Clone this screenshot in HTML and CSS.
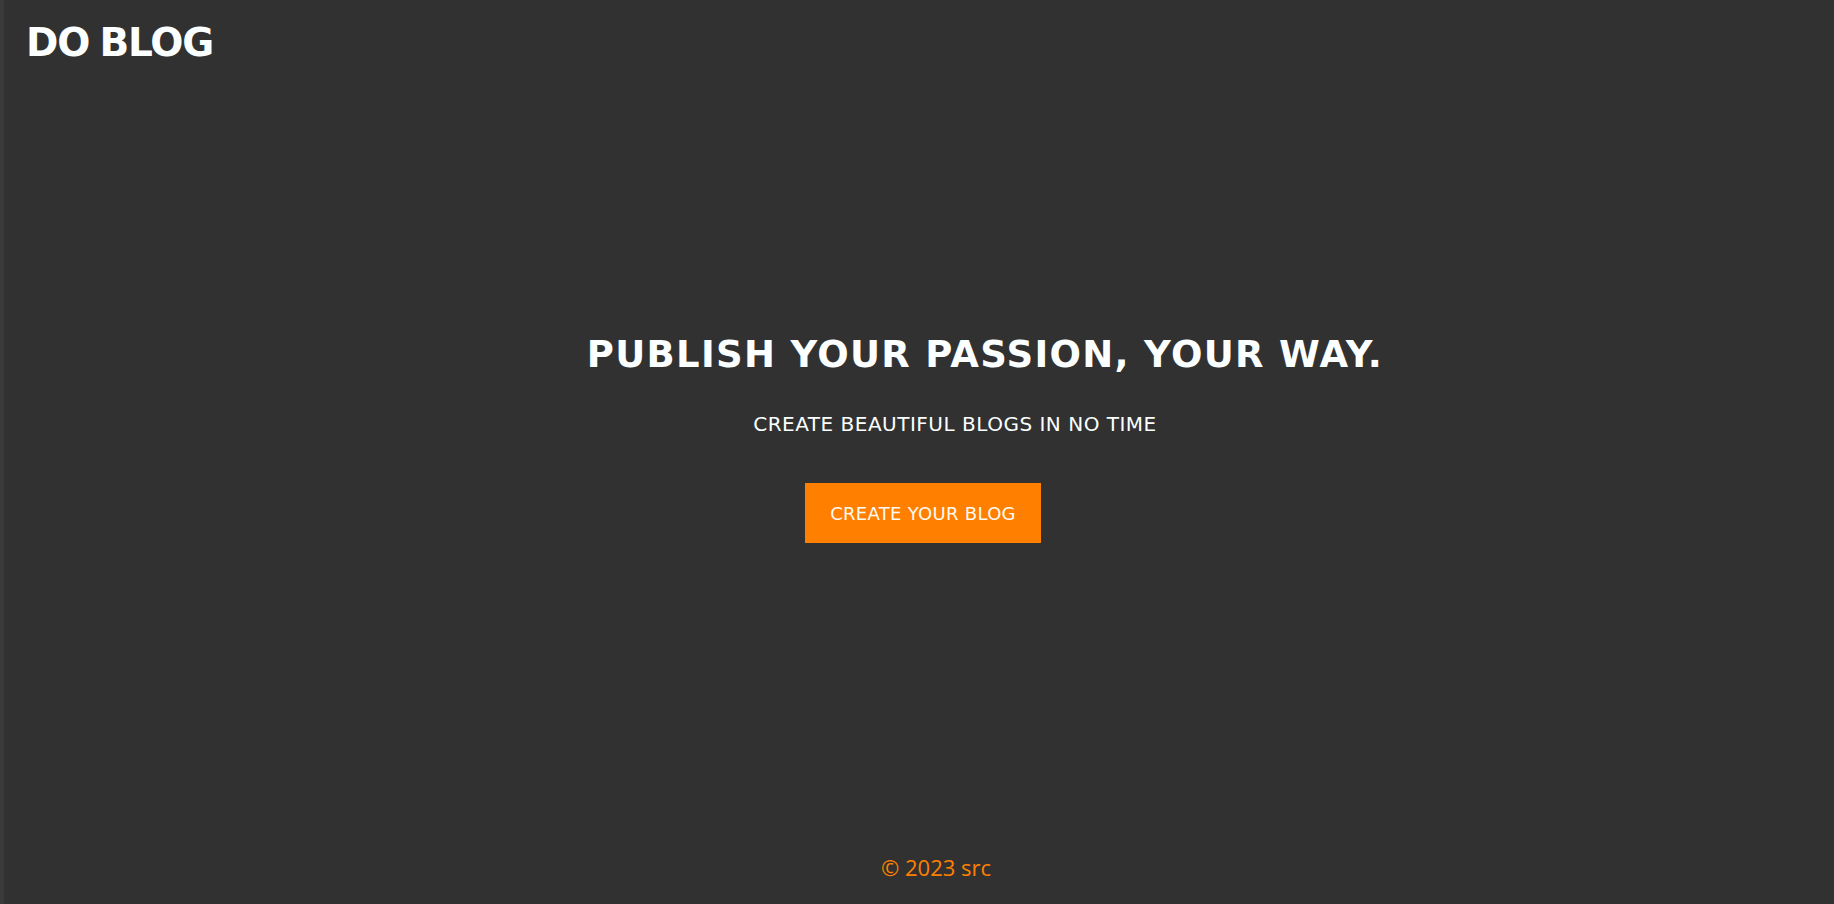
FILE: index.html
```html
<!DOCTYPE html>
<html lang="en">
<head>
<meta charset="utf-8">
<title>DO BLOG</title>
<link rel="stylesheet" href="styles.css">
</head>
<body>
  <header class="site-header">
    <div class="logo">DO BLOG</div>
  </header>
  <main class="hero">
    <h1 class="hero-title">PUBLISH YOUR PASSION, YOUR WAY.</h1>
    <p class="hero-subtitle">CREATE BEAUTIFUL BLOGS IN NO TIME</p>
    <a class="hero-button" href="#">CREATE YOUR BLOG</a>
  </main>
  <footer class="site-footer">© 2023 src</footer>
</body>
</html>
```
FILE: styles.css
```css
html, body {
  margin: 0;
  padding: 0;
}

body {
  height: 904px;
  box-sizing: border-box;
  background: #313131;
  border-left: 4px solid #3a3a3a;
  display: flex;
  flex-direction: column;
  font-family: "DejaVu Sans", sans-serif;
  color: #fbffff;
  overflow: hidden;
}

.site-header {
  padding: 23px 0 0 22px;
}

.logo {
  font-size: 39px;
  font-weight: bold;
  line-height: 1;
  letter-spacing: -1.2px;
  word-spacing: -2px;
}

.hero {
  display: flex;
  flex-direction: column;
  align-items: center;
  padding-top: 274px;
}

.hero-title {
  margin: 0 0 0 132px;
  font-size: 37px;
  font-weight: bold;
  line-height: 1;
  letter-spacing: 1.3px;
}

.hero-subtitle {
  margin: 41px 0 0 72px;
  font-size: 20px;
  line-height: 1;
  letter-spacing: 0.5px;
}

.hero-button {
  margin: 49px 0 0 8px;
  width: 236px;
  height: 60px;
  display: flex;
  align-items: center;
  justify-content: center;
  background: #ff8000;
  color: #fffaf2;
  text-decoration: none;
  font-size: 18px;
  letter-spacing: 0.3px;
}

.site-footer {
  margin-top: auto;
  padding-bottom: 22px;
  text-align: center;
  padding-left: 34px;
  font-family: "Open Sans", sans-serif;
  font-size: 22px;
  color: #ff8000;
}
```
